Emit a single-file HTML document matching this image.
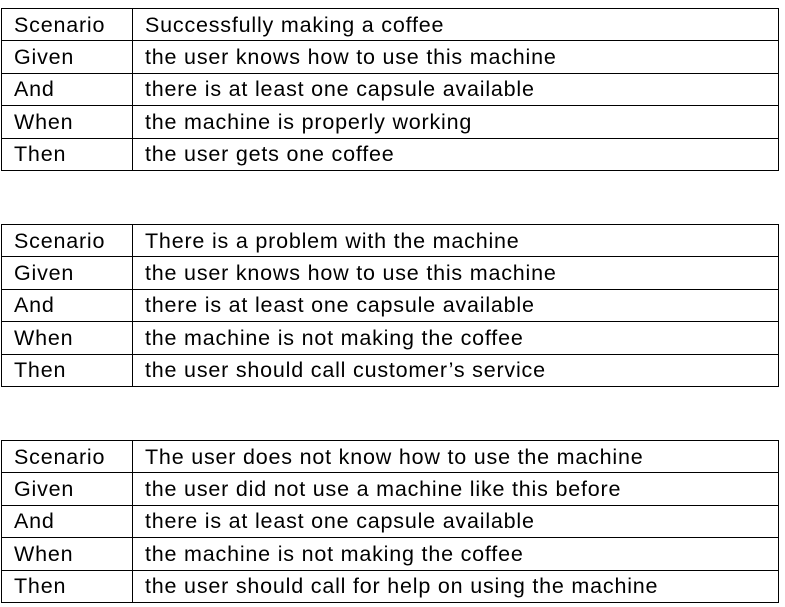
<!DOCTYPE html>
<html><head><style>
body{margin:0;background:#fff;width:785px;height:607px;position:relative;font-family:"Liberation Sans",sans-serif;font-size:21.5px;letter-spacing:0.8px;color:#000}
table{position:absolute;left:1px;width:778px;border-collapse:collapse;font-size:21.5px}
td{border:1px solid #000;height:32.4px;padding:0 0 0 12px;line-height:30px;white-space:nowrap;box-sizing:border-box}
td:first-child{width:131px}
</style></head><body>
<table style="top:8px">
<tr><td>Scenario</td><td>Successfully making a coffee</td></tr>
<tr><td>Given</td><td>the user knows how to use this machine</td></tr>
<tr><td>And</td><td>there is at least one capsule available</td></tr>
<tr><td>When</td><td>the machine is properly working</td></tr>
<tr><td>Then</td><td>the user gets one coffee</td></tr>
</table>
<table style="top:224px">
<tr><td>Scenario</td><td>There is a problem with the machine</td></tr>
<tr><td>Given</td><td>the user knows how to use this machine</td></tr>
<tr><td>And</td><td>there is at least one capsule available</td></tr>
<tr><td>When</td><td>the machine is not making the coffee</td></tr>
<tr><td>Then</td><td>the user should call customer’s service</td></tr>
</table>
<table style="top:440px">
<tr><td>Scenario</td><td>The user does not know how to use the machine</td></tr>
<tr><td>Given</td><td>the user did not use a machine like this before</td></tr>
<tr><td>And</td><td>there is at least one capsule available</td></tr>
<tr><td>When</td><td>the machine is not making the coffee</td></tr>
<tr><td>Then</td><td>the user should call for help on using the machine</td></tr>
</table>
</body></html>
